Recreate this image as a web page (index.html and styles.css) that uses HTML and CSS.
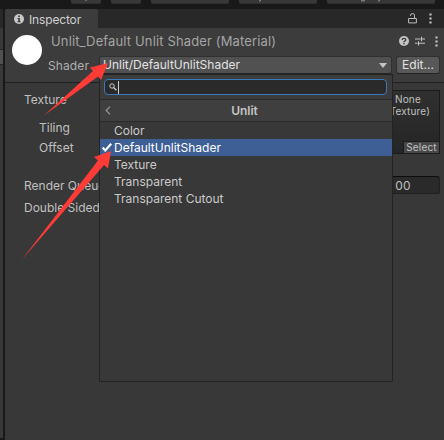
FILE: index.html
```html
<!DOCTYPE html>
<html lang="en">
<head>
<meta charset="utf-8">
<title>Inspector</title>
<link rel="stylesheet" href="styles.css">
</head>
<body>
<div class="window">
  <div class="toolbar">
    <i class="tool tool-s"></i><i class="tool tool-s"></i><i class="tool tool-m"></i><i class="tool tool-m"></i><i class="tool tool-l"></i>
  </div>
  <div class="workspace">
    <div class="neighbor"><div class="neighbor-tab"></div><div class="neighbor-row"></div></div>
    <main class="inspector">
      <div class="tabbar">
        <div class="tab">
          <svg width="10" height="10" viewBox="0 0 10 10"><circle cx="5" cy="5" r="5" fill="#c8c8c8"/><path d="M4.2 1.500h1.600v1.400H4.200zM3.600 4h2.200v3.200h.8v1H3.500v-1h.8V5h-.7z" fill="#333"/></svg>
          <span class="tab-title">Inspector</span>
        </div>
        <div class="tab-actions">
          <svg width="9" height="11" viewBox="0 0 9 11" fill="none" stroke="#bdbdbd"><path d="M.6 5.500h7.800v4.400H.6zM2.500 3V2.200Q2.500.6 4.500.6T6.500 2.200V5.500"/></svg>
          <svg width="3" height="11" viewBox="0 0 3 11" fill="#c4c4c4"><path d="M.4.5h2.200v2H.4zM.4 4.500h2.200v2H.4zM.4 8.500h2.200v2H.4z"/></svg>
        </div>
      </div>
      <header class="header">
        <div class="preview"></div>
        <div class="header-main">
          <div class="title-row">
            <h1 class="title">Unlit_Default Unlit Shader (Material)</h1>
            <div class="title-actions">
              <svg class="help" width="10" height="10" viewBox="0 0 10 10"><circle cx="5" cy="5" r="5" fill="#c4c4c4"/><path d="M3.100 3.900Q3.200 2.300 5 2.300T6.800 3.800Q6.800 4.600 5.800 5.100T5 6.200" fill="none" stroke="#383838" stroke-width="1.3"/><path d="M4.300 7h1.400v1.300H4.300z" fill="#383838"/></svg>
              <svg class="sliders" width="10" height="10" viewBox="0 0 10 10" fill="none" stroke="#c4c4c4"><path d="M0 3h5.500M7 3h3M6.500.8v4.400M0 7.300h2.500M4 7.300h6M3.500 5.200v4.400" stroke-width="1.1"/></svg>
              <svg width="3" height="11" viewBox="0 0 3 11" fill="#c4c4c4"><path d="M.4.5h2.200v2H.4zM.4 4.500h2.200v2H.4zM.4 8.500h2.200v2H.4z"/></svg>
            </div>
          </div>
          <div class="shader-row">
            <span class="shader-label">Shader</span>
            <div class="dropdown"><span>Unlit/DefaultUnlitShader</span><i class="caret"></i></div>
            <div class="edit">Edit...</div>
          </div>
        </div>
      </header>
      <section class="properties">
        <div class="labels">
          <div class="label">Texture</div>
          <div class="label tiling">Tiling</div>
          <div class="label offset">Offset</div>
          <div class="label queue">Render Queue</div>
          <div class="label sided">Double Sided</div>
        </div>
        <div class="fields">
          <div class="texture-slot"><div class="slot-text">None<br>(Texture)</div><div class="select">Select</div></div>
          <div class="queue-field">00</div>
        </div>
      </section>
    </main>
  </div>
</div>
<div class="menu">
  <div class="search-row"><div class="search">
    <svg width="8" height="8" viewBox="0 0 8 8" fill="none" stroke="#c8c8c8"><circle cx="3" cy="3" r="2.2"/><path d="M4.600 4.600l2.800 2.600" stroke-width="1.4"/></svg>
    <i class="cursor"></i>
  </div></div>
  <div class="menu-header">
    <svg width="6" height="9" viewBox="0 0 6 9" fill="none" stroke="#999" stroke-width="1.2"><path d="M5 .7L1.200 4.500 5 8.300"/></svg>
    <span>Unlit</span>
  </div>
  <div class="items">
    <div class="item"><span>Color</span></div>
    <div class="item selected"><svg class="check" width="10" height="9" viewBox="0 0 10 9" fill="none" stroke="#fff" stroke-width="2.2"><path d="M.7 4.600l2.600 2.800L9.200.8"/></svg><span>DefaultUnlitShader</span></div>
    <div class="item"><span>Texture</span></div>
    <div class="item"><span>Transparent</span></div>
    <div class="item"><span>Transparent Cutout</span></div>
  </div>
</div>
<svg class="arrows" width="444" height="440" viewBox="0 0 444 440">
  <path d="M86 0v1M259 1.500l2-1.500M361 .8h4M378 1.500l2-1.500" stroke="#999" fill="none"/>
  <g fill="#ff3b38">
    <path d="M44 115.500L93 71l-3-3.500L108 63l-7 17-3-3.500z"/>
    <path d="M22 259.500L98 160.500l-4-3.500 17-6-3 17.500-4-3.500z"/>
  </g>
</svg>
</body>
</html>
```
FILE: styles.css
```css
* { box-sizing: border-box; }
body { margin: 0; width: 444px; height: 440px; overflow: hidden; background: #191919; color: #c0c0c0; font: 12px/17px Inter, "Liberation Sans", sans-serif; letter-spacing: 0; position: relative; }
svg { display: block; flex: none; }
.window { height: 440px; display: flex; flex-direction: column; }
.toolbar { height: 9px; flex: none; padding-left: 71px; display: flex; gap: 10px; }
.tool { height: 4px; background: #383838; border-radius: 0 0 2px 2px; border-bottom: 1px solid #303030; flex: none; }
.tool-s { width: 30px; }
.tool-m { width: 78px; }
.tool-l { width: 108px; }
.workspace { flex: 1; display: flex; gap: 2px; }
.neighbor { width: 3px; height: 429px; background: #383838; flex: none; }
.neighbor-tab { height: 19px; background: #282828; }
.neighbor-row { height: 16px; margin-top: 21px; background: #505050; border: solid #242424; border-width: 1px 0; }
.inspector { width: 439px; background: #383838; display: flex; flex-direction: column; }
.tabbar { height: 19px; background: #282828; display: flex; justify-content: space-between; flex: none; }
.tab { width: 93px; background: #3c3c3c; border-radius: 2px 2px 0 0; display: flex; align-items: center; padding-left: 9px; gap: 5px; }
.tab-title { color: #d0d0d0; line-height: 19px; padding-top: 2px; letter-spacing: -.15px; }
.tab-actions { display: flex; gap: 12px; padding: 4px 12px 0 0; }
.header { height: 55px; flex: none; background: #3c3c3c; border-bottom: 1px solid #1f1f1f; display: flex; padding-left: 7px; }
.preview { width: 30px; height: 30px; border-radius: 50%; background: #fff; margin: 7px 6px 0 0; flex: none; }
.header-main { flex: 1; }
.title-row { height: 28px; display: flex; justify-content: space-between; }
.title { margin: 0 0 0 3px; font-size: 13px; font-weight: 400; line-height: 27px; color: #a4a4a4; letter-spacing: .14px; white-space: nowrap; }
.title-actions { display: flex; align-items: center; gap: 6px; padding: 0 6px 2px 0; }
.sliders { margin-right: 4px; }
.shader-row { display: flex; height: 18px; line-height: 18px; }
.shader-label { width: 51px; color: #b0b0b0; padding-top: 1px; letter-spacing: .1px; }
.dropdown { width: 293px; height: 18px; background: #515151; border: 1px solid #303030; border-bottom-color: #242424; border-radius: 3px; display: flex; justify-content: space-between; align-items: center; padding: 0 4px 0 3px; color: #e2e2e2; }
.caret { border: 4px solid transparent; border-top: 5px solid #c4c4c4; border-bottom: 0; }
.edit { width: 44px; margin-left: 4px; background: #585858; border: 1px solid #303030; border-bottom-color: #242424; border-radius: 3px; color: #e2e2e2; text-align: center; line-height: 16px; }
.properties { display: flex; flex: 1; }
.labels { width: 96px; padding: 8px 0 0 19px; white-space: nowrap; flex: none; }
.label { height: 17px; }
.tiling { margin: 11px 0 0 15px; }
.offset { margin: 3px 0 0 15px; }
.queue { margin-top: 21px; }
.sided { margin-top: 5px; }
.fields { padding: 7px 4px 0 238px; flex: 1; }
.texture-slot { width: 101px; height: 64px; border: 1px solid #1b1b1b; background: linear-gradient(#303030, #252525); display: flex; flex-direction: column; justify-content: space-between; align-items: flex-end; font-size: 10px; line-height: 12px; }
.slot-text { padding: 2px 9px 0 0; text-align: center; letter-spacing: .15px; }
.select { width: 36px; height: 12px; background: #484848; border-left: 1px solid #1b1b1b; border-top: 1px solid #1b1b1b; text-align: center; letter-spacing: .2px; line-height: 11px; }
.queue-field { width: 101px; height: 18px; margin-top: 22px; background: #2a2a2a; border: 1px solid #202020; border-top-color: #0d0d0d; border-radius: 3px; text-align: right; padding-right: 28px; line-height: 18px; letter-spacing: .3px; }
.menu { position: absolute; left: 99px; top: 74px; width: 294px; height: 308px; background: #383838; border: 1px solid #232323; }
.search-row { height: 25px; background: #3c3c3c; border-bottom: 1px solid #2a2a2a; padding: 4px 0 0 4px; }
.search { width: 283px; height: 16px; border: 1px solid #3a79bb; border-radius: 4px; background: #2a2a2a; display: flex; align-items: center; padding-left: 4px; }
.cursor { width: 1px; height: 13px; background: #d0d0d0; margin-left: 1px; }
.menu-header { height: 22px; background: #3f3f3f; border-bottom: 1px solid #2a2a2a; display: flex; align-items: center; padding-left: 5px; }
.menu-header span { flex: 1; text-align: center; margin-right: 14px; color: #c4c4c4; font-weight: 600; }
.items { color: #cacaca; }
.item { height: 17px; padding-left: 2px; display: flex; align-items: center; line-height: 17px; }
.item span { padding-left: 12px; }
.selected { background: #3e5f96; color: #fff; }
.selected span { padding-left: 2px; }
.arrows { position: absolute; left: 0; top: 0; }
```
